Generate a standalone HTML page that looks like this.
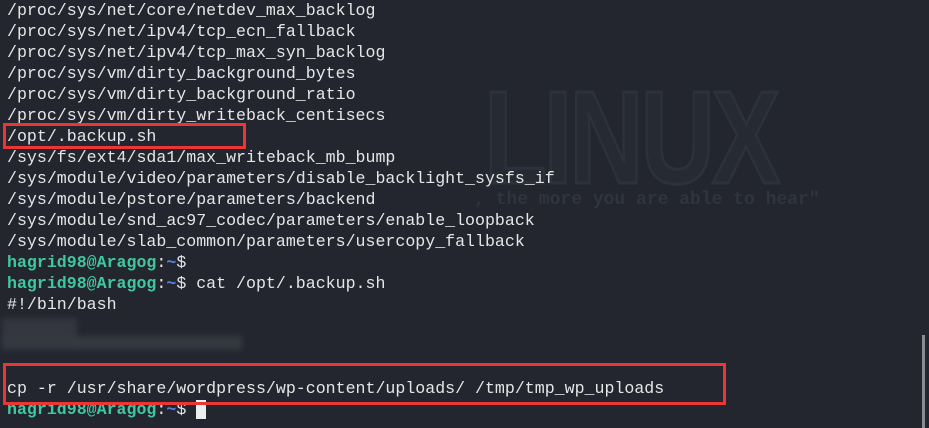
<!DOCTYPE html>
<html><head><style>
body{margin:0;width:929px;height:428px;overflow:hidden;background:#23262f;position:relative;font-family:"Liberation Mono",monospace;}
.t{position:absolute;left:7px;top:0px;font-size:16.6px;line-height:21px;color:#e6e6e6;white-space:pre;}
.g{color:#3fc8a0;font-weight:bold}.b{color:#4f86e0;font-weight:bold}
.box{position:absolute;border:3px solid #ec3535;box-sizing:border-box}
.wm{position:absolute;left:484px;top:62px;font:900 132px "Liberation Sans",sans-serif;color:#262a33;-webkit-text-stroke:3px #2d313b;letter-spacing:-4px;transform:scaleX(0.78);transform-origin:left top}
.q{position:absolute;left:474px;top:190px;font:bold 18px "Liberation Mono",monospace;color:#30343e}
.blur{position:absolute;background:#3a3d45;filter:blur(3px)}
</style></head><body>
<div class="wm">LINUX</div>
<div class="q">, the more you are able to hear"</div>
<div class="t">/proc/sys/net/core/netdev_max_backlog
/proc/sys/net/ipv4/tcp_ecn_fallback
/proc/sys/net/ipv4/tcp_max_syn_backlog
/proc/sys/vm/dirty_background_bytes
/proc/sys/vm/dirty_background_ratio
/proc/sys/vm/dirty_writeback_centisecs
/opt/.backup.sh
/sys/fs/ext4/sda1/max_writeback_mb_bump
/sys/module/video/parameters/disable_backlight_sysfs_if
/sys/module/pstore/parameters/backend
/sys/module/snd_ac97_codec/parameters/enable_loopback
/sys/module/slab_common/parameters/usercopy_fallback
<span class="g">hagrid98@Aragog</span>:<span class="b">~</span>$
<span class="g">hagrid98@Aragog</span>:<span class="b">~</span>$ cat /opt/.backup.sh
#!/bin/bash



cp -r /usr/share/wordpress/wp-content/uploads/ /tmp/tmp_wp_uploads
<span class="g">hagrid98@Aragog</span>:<span class="b">~</span>$ <span style="background:#eee">&nbsp;</span></div>
<div class="blur" style="left:2px;top:318px;width:75px;height:22px;opacity:.7"></div>
<div class="blur" style="left:2px;top:336px;width:240px;height:14px;opacity:.8"></div>
<div class="box" style="left:3px;top:123px;width:243px;height:26px"></div>
<div class="box" style="left:3px;top:363px;width:723px;height:42px"></div>
<div style="position:absolute;left:922px;top:335px;width:3px;height:93px;background:#8a8d93"></div>
</body></html>
